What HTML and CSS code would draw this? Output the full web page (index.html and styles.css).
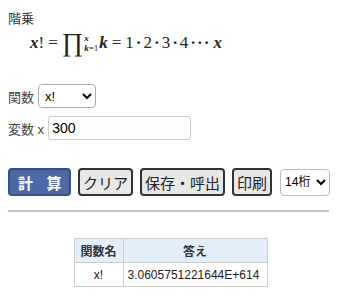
FILE: index.html
```html
<!DOCTYPE html>
<html lang="ja">
<head>
    <meta charset="UTF-8">
    <meta name="viewport" content="width=device-width, initial-scale=1.0">
    <title>階乗</title>
    <link rel="stylesheet" href="styles.css">
</head>
<body>

    <!-- Title and formula -->
    <div class="title">階乗</div>
    <div class="formula">
        <i>x</i><span>!</span><span class="op">=</span><span class="prod">&prod;</span><span class="limits"><sup><i>x</i></sup><sub><i>k</i>=1</sub></span><i>k</i><span class="op">=</span><span>1</span><span class="dot">&middot;</span><span>2</span><span class="dot">&middot;</span><span>3</span><span class="dot">&middot;</span><span>4</span><span class="dots">&middot;&middot;&middot;</span><i>x</i>
    </div>

    <!-- Inputs -->
    <div class="row row-func">
        <label>関数</label>
        <select class="func-select">
            <option>x!</option>
        </select>
    </div>
    <div class="row row-var">
        <label>変数 x</label>
        <input type="text" class="var-input" value="300">
    </div>

    <!-- Buttons -->
    <div class="buttons">
        <button class="btn btn-calc">計 算</button>
        <button class="btn">クリア</button>
        <button class="btn">保存・呼出</button>
        <button class="btn">印刷</button>
        <select class="digits">
            <option>14桁</option>
        </select>
    </div>

    <hr class="divider">

    <!-- Result -->
    <table class="result">
        <tr>
            <th class="col-name">関数名</th>
            <th>答え</th>
        </tr>
        <tr>
            <td class="col-name">x!</td>
            <td>3.0605751221644E+614</td>
        </tr>
    </table>

</body>
</html>
```

FILE: styles.css
```css
/* General Styling */
body {
    margin: 8px;
    font-family: "Liberation Sans", "Noto Sans CJK JP", sans-serif;
    font-size: 13px;
    color: #333;
    background: #fff;
}

.title {
    margin-top: 2px;
    line-height: 18px;
}

/* Formula */
.formula {
    display: flex;
    align-items: center;
    margin: 3px 0 0 22px;
    height: 24px;
    font-family: "Liberation Serif", "DejaVu Serif", serif;
    font-size: 17px;
    color: #222;
}

.formula i {
    font-style: italic;
    font-weight: bold;
}

.op {
    margin: 0 4px;
}

.dot {
    margin: 0 2px;
    font-weight: bold;
}

.dots {
    margin: 0 3px 0 2px;
    letter-spacing: 1px;
    font-weight: bold;
}

.prod {
    font-size: 26px;
    line-height: 1;
    margin-right: 1px;
}

.limits {
    display: inline-flex;
    flex-direction: column;
    font-size: 9px;
    line-height: 10px;
    margin-right: 1px;
}

.limits sup, .limits sub {
    vertical-align: baseline;
    font-size: 9px;
}

/* Inputs */
.row {
    display: flex;
    align-items: center;
    gap: 4px;
}

.row label {
    color: #444;
}

.row-func {
    margin-top: 29px;
}

.row-var {
    margin-top: 8px;
}

.func-select {
    width: 58px;
    height: 24px;
    font-family: "Liberation Sans", sans-serif;
    font-size: 13px;
    border: 1px solid #aaa;
    border-radius: 4px;
    background: #fff;
    padding: 0 2px;
}

.var-input {
    width: 135px;
    height: 20px;
    padding: 1px 3px;
    font-family: "Liberation Sans", sans-serif;
    font-size: 14px;
    border: 1px solid #ccc;
    border-radius: 3px;
    background: #fffefc;
}

/* Buttons */
.buttons {
    display: flex;
    align-items: center;
    gap: 7px;
    margin-top: 28px;
}

.btn {
    flex: none;
    white-space: nowrap;
    height: 28px;
    padding: 0 3px;
    font-family: "Noto Sans CJK JP", sans-serif;
    font-size: 15px;
    color: #222;
    background: #e8e8e8;
    border: 2px solid #333;
    border-radius: 4px;
    line-height: 1;
}

.btn-calc {
    width: 63px;
    color: #fff;
    font-weight: bold;
    letter-spacing: 5px;
    padding-left: 8px;
    background: #4c69a6;
    border-color: #3a4f7e;
}

.digits {
    flex: none;
    height: 27px;
    width: 50px;
    margin-left: 1px;
    font-family: "Liberation Sans", "Noto Sans CJK JP", sans-serif;
    font-size: 12px;
    border: 1px solid #bbb;
    border-radius: 4px;
    background: #fff;
}

/* Divider */
.divider {
    margin: 14px 4px 0 0;
    border: 0;
    border-top: 2px solid #c4c4c4;
}

/* Result table */
.result {
    margin: 26px auto 0;
    border-collapse: collapse;
    font-size: 12px;
}

.result th, .result td {
    border: 1px solid #ccc;
    padding: 3px 4px;
    height: 17px;
}

.result th {
    background: #e3eefa;
    font-weight: bold;
    color: #333;
}

.result td {
    color: #222;
}

.result .col-name {
    width: 40px;
    text-align: center;
}

.result th:last-child {
    width: 135px;
}
```
